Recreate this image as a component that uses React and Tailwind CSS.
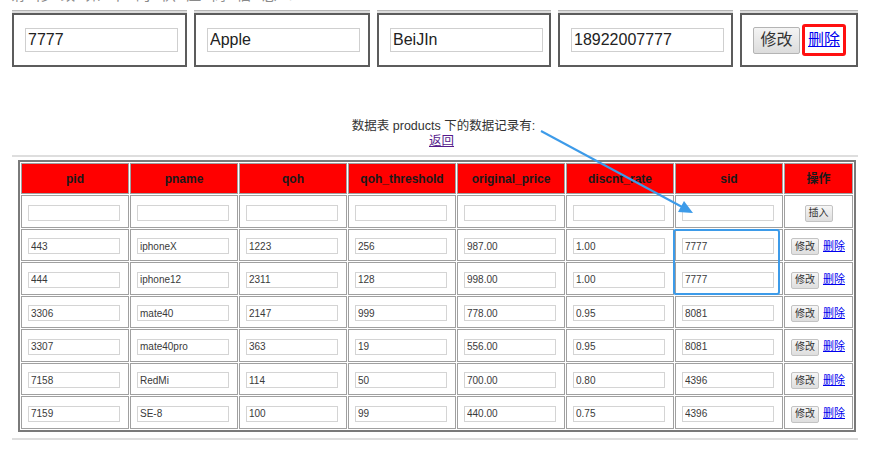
const font = { fontFamily: '"Liberation Sans", "Noto Sans CJK SC", sans-serif' };

const topFields = [
  { value: '7777', w: 'w-[175px]' },
  { value: 'Apple', w: 'w-[176px]' },
  { value: 'BeiJIn', w: 'w-[174px]' },
  { value: '18922007777', w: 'w-[175px]' },
];

const columns = ['pid', 'pname', 'qoh', 'qoh_threshold', 'original_price', 'discnt_rate', 'sid'];

const rows = [
  ['443', 'iphoneX', '1223', '256', '987.00', '1.00', '7777'],
  ['444', 'iphone12', '2311', '128', '998.00', '1.00', '7777'],
  ['3306', 'mate40', '2147', '999', '778.00', '0.95', '8081'],
  ['3307', 'mate40pro', '363', '19', '556.00', '0.95', '8081'],
  ['7158', 'RedMi', '114', '50', '700.00', '0.80', '4396'],
  ['7159', 'SE-8', '100', '99', '440.00', '0.75', '4396'],
];

const TopCell = ({ w, children }) => (
  <div className={`${w} flex flex-col shrink-0`}>
    <div className="h-[3px] border-t border-[#b5b5b5] bg-[#dcdcdc]" />
    <div className="h-[54px] border-2 border-[#5c5c5c] flex items-center pl-[11px]">{children}</div>
  </div>
);

const CellInput = ({ value }) => (
  <input
    readOnly
    value={value}
    className="w-[92px] h-[16px] border border-[#d4d4d4] bg-white px-[2px] text-[10px] text-[#3a3a3a] outline-none"
  />
);

const SmallButton = ({ children }) => (
  <button className="h-[17px] px-[3px] border border-[#c3c3c3] rounded-[2px] bg-gradient-to-b from-[#f6f6f6] to-[#dedede] text-[10px] text-[#333] leading-none">
    {children}
  </button>
);

export default function App() {
  return (
    <div className="relative w-[883px] h-[462px] overflow-hidden bg-white" style={font}>
      {/* heading of the page, scrolled mostly out of view */}
      <div className="h-[5px] overflow-hidden pl-[10px]">
        <div className="-mt-[14px] text-[15px] leading-[18px] text-[#8a8a8a] tracking-[3px]">请 修 改 如 下 的 供 应 商 信 息 ：</div>
      </div>
      <div className="h-[5px]" />

      <div className="flex gap-[7px] pl-[12px]">
        {topFields.map((f) => (
          <TopCell key={f.value} w={f.w}>
            <input
              readOnly
              value={f.value}
              className="w-[153px] h-[24px] border border-[#cfcfcf] px-[2px] text-[16px] text-[#222] outline-none"
            />
          </TopCell>
        ))}
        <TopCell w="w-[118px]">
          <button className="h-[27px] w-[47px] border border-[#b4b4b4] rounded-[2px] bg-gradient-to-b from-[#f4f4f4] to-[#dcdcdc] text-[16px] text-[#333]">
            修改
          </button>
          <span className="ml-[2px] h-[32px] px-[3px] flex items-center border-[3px] border-[#ff1010] rounded-[3px]">
            <a href="#" className="text-[16px] text-[#0000ee] underline">删除</a>
          </span>
        </TopCell>
      </div>

      <div className="mt-[52px] text-center text-[12.5px] leading-[15px] text-[#333]">
        <div className="pl-[4px]">数据表 products 下的数据记录有:</div>
        <a href="#" className="text-[#551a8b] underline">返回</a>
      </div>

      <div className="mt-[6px] ml-[12px] w-[846px] h-[2px] bg-[#dedede]" />

      <table className="mt-[3px] ml-[18px] w-[838px] table-fixed border-separate border-spacing-[1px] border-2 border-[#7a7a7a]">
        <thead>
          <tr>
            {columns.map((c) => (
              <th key={c} className="w-[108px] h-[31px] border border-[#a0a0a0] bg-[#ff0000] text-[12px] font-bold text-[#1a1a1a]">
                {c}
              </th>
            ))}
            <th className="w-[69px] h-[31px] border border-[#a0a0a0] bg-[#ff0000] text-[12px] font-bold text-[#1a1a1a]">操作</th>
          </tr>
        </thead>
        <tbody>
          <tr>
            {columns.map((c) => (
              <td key={c} className="h-[32.5px] border border-[#a0a0a0] pl-[6px]">
                <CellInput value="" />
              </td>
            ))}
            <td className="h-[32.5px] border border-[#a0a0a0] text-center">
              <SmallButton>插入</SmallButton>
            </td>
          </tr>
          {rows.map((r) => (
            <tr key={r[0]}>
              {r.map((v, i) => (
                <td key={i} className="h-[32.5px] border border-[#a0a0a0] pl-[6px]">
                  <CellInput value={v} />
                </td>
              ))}
              <td className="h-[32.5px] border border-[#a0a0a0] pl-[6px] whitespace-nowrap">
                <SmallButton>修改</SmallButton>
                <a href="#" className="ml-[4px] text-[11px] text-[#0000ee] underline">删除</a>
              </td>
            </tr>
          ))}
        </tbody>
      </table>

      <div className="mt-[6px] ml-[12px] w-[846px] h-[2px] bg-[#dedede]" />

      {/* annotation overlay */}
      <div className="absolute left-[673px] top-[229px] w-[107px] h-[66px] border-2 border-[#3d9be9] rounded-[3px] pointer-events-none" />
      <svg className="absolute left-0 top-0 pointer-events-none" width="883" height="462">
        <line x1="541" y1="131" x2="684" y2="208" stroke="#3d9be9" strokeWidth="2" />
        <polygon points="693,213 678,212 684,201" fill="#3d9be9" />
      </svg>
    </div>
  );
}
